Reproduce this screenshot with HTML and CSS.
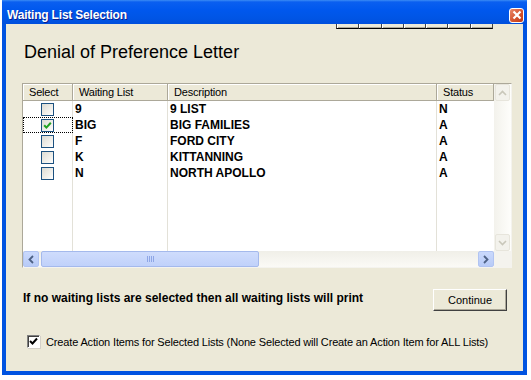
FILE: index.html
```html
<!DOCTYPE html>
<html lang="en">
<head>
    <meta charset="UTF-8">
    <title>Waiting List Selection</title>
    <link rel="stylesheet" href="styles.css">
</head>
<body>

<div class="window">
    <div class="titlebar">
        <span class="title">Waiting List Selection</span>
        <span class="close-btn">
            <svg width="10" height="10" viewBox="0 0 10 10"><path d="M1.5 1.5 L8.5 8.5 M8.5 1.5 L1.5 8.5" stroke="#fff" stroke-width="2.2"/></svg>
        </span>
    </div>

    <div class="client">
        <div class="tabstrip">
            <span></span><span></span><span></span><span></span><span></span><span></span><span></span>
        </div>

        <h1 class="heading">Denial of Preference Letter</h1>

        <div class="grid">
            <div class="grid-main">
                <div class="list">
                    <div class="hcell">Select</div>
                    <div class="hcell">Waiting List</div>
                    <div class="hcell">Description</div>
                    <div class="hcell">Status</div>

                    <div class="cell sel"><span class="xp-box"></span></div>
                    <div class="cell">9</div>
                    <div class="cell">9 LIST</div>
                    <div class="cell">N</div>

                    <div class="cell sel focused"><span class="xp-box checked"><svg width="9" height="9" viewBox="0 0 9 9"><path d="M1.2 4.2 L3.4 6.6 L7.8 1.8" fill="none" stroke="#21a121" stroke-width="2"/></svg></span></div>
                    <div class="cell">BIG</div>
                    <div class="cell">BIG FAMILIES</div>
                    <div class="cell">A</div>

                    <div class="cell sel"><span class="xp-box"></span></div>
                    <div class="cell">F</div>
                    <div class="cell">FORD CITY</div>
                    <div class="cell">A</div>

                    <div class="cell sel"><span class="xp-box"></span></div>
                    <div class="cell">K</div>
                    <div class="cell">KITTANNING</div>
                    <div class="cell">A</div>

                    <div class="cell sel"><span class="xp-box"></span></div>
                    <div class="cell">N</div>
                    <div class="cell">NORTH APOLLO</div>
                    <div class="cell">A</div>

                    <div class="cell"></div>
                    <div class="cell"></div>
                    <div class="cell"></div>
                    <div class="cell"></div>
                </div>
                <div class="vscroll">
                    <span class="vbtn"><svg width="9" height="6" viewBox="0 0 9 6"><path d="M1 5 L4.5 1.5 L8 5" fill="none" stroke="#c9c7ba" stroke-width="1.6"/></svg></span>
                    <span class="vtrack"></span>
                    <span class="vbtn"><svg width="9" height="6" viewBox="0 0 9 6"><path d="M1 1 L4.5 4.5 L8 1" fill="none" stroke="#c9c7ba" stroke-width="1.6"/></svg></span>
                </div>
            </div>
            <div class="hscroll-row">
                <div class="hscroll">
                    <span class="hbtn"><svg width="6" height="9" viewBox="0 0 6 9"><path d="M5 1 L1.5 4.5 L5 8" fill="none" stroke="#4d6185" stroke-width="1.8"/></svg></span>
                    <span class="thumb"><span class="grip"></span></span>
                    <span class="htrack"></span>
                    <span class="hbtn"><svg width="6" height="9" viewBox="0 0 6 9"><path d="M1 1 L4.5 4.5 L1 8" fill="none" stroke="#4d6185" stroke-width="1.8"/></svg></span>
                </div>
                <div class="corner"></div>
            </div>
        </div>

        <div class="note-row">
            <p class="note">If no waiting lists are selected then all waiting lists will print</p>
            <button class="continue-btn">Continue</button>
        </div>

        <label class="action-check">
            <span class="classic-box"><svg width="9" height="9" viewBox="0 0 9 9"><path d="M1 4 L3.5 6.5 L8 1.5" fill="none" stroke="#000" stroke-width="2"/></svg></span>
            Create Action Items for Selected Lists (None Selected will Create an Action Item for ALL Lists)
        </label>
    </div>
</div>

</body>
</html>
```

FILE: styles.css
```css
body {
    margin: 0;
    background: #fff;
    font-family: "Liberation Sans", Arial, sans-serif;
}
.window {
    width: 525px;
    margin-left: 2px;
    background: #0053e1;
    padding: 0 4px 4px 4px;
    box-sizing: border-box;
}
.titlebar {
    height: 24px;
    margin: 0 -4px;
    padding: 6px 3px 0 5px;
    box-sizing: border-box;
    display: flex;
    align-items: center;
    justify-content: space-between;
    background: linear-gradient(#3b8cf5 0, #0a5ff0 2px, #0058ee 40%, #0055e5 75%, #004fdc 100%);
}
.title {
    color: #fff;
    font-weight: bold;
    font-size: 12px;
    letter-spacing: -0.2px;
    text-shadow: 1px 1px 0 #0a1e8c;
}
.close-btn {
    width: 13px;
    height: 13px;
    border: 1px solid #fff;
    border-radius: 3px;
    background: linear-gradient(135deg, #e98a6c, #d5532f 55%, #bf3a17);
    display: flex;
    align-items: center;
    justify-content: center;
}
.client {
    background: #ece9d8;
    height: 347px;
    padding-left: 16px;
}
.tabstrip {
    display: flex;
    width: 157px;
    height: 5px;
    margin-left: 314px;
}
.tabstrip span {
    flex: 1;
    border-right: 1px solid #404040;
    border-bottom: 1px solid #000;
    box-shadow: inset 1px 0 0 #fff, inset 0 -1px 0 #aca899;
}
.tabstrip span:first-child {
    border-left: 1px solid #404040;
}
.heading {
    margin: 12px 0 0 2px;
    font-size: 18px;
    font-weight: normal;
    line-height: 22px;
    color: #000;
}
.grid {
    width: 490px;
    height: 185px;
    margin-top: 20px;
    box-sizing: border-box;
    border: 1px solid #aca899;
    border-right-color: #f4f3ee;
    border-bottom-color: #f4f3ee;
    display: flex;
    flex-direction: column;
}
.grid-main {
    display: flex;
    height: 167px;
}
.list {
    width: 471px;
    display: grid;
    grid-template-columns: 50px 95px 269px 57px;
    grid-template-rows: 17px repeat(5, 16px) 1fr;
    background: #fff;
}
.hcell {
    background: #ece9d8;
    border-right: 1px solid #aca899;
    border-bottom: 1px solid #aca899;
    box-shadow: inset 1px 1px 0 #fff;
    font-size: 11px;
    line-height: 17px;
    padding-left: 6px;
    letter-spacing: -0.2px;
    color: #000;
    overflow: hidden;
}
.cell {
    border-right: 1px solid #e3e1d8;
    font-size: 12px;
    font-weight: bold;
    line-height: 16px;
    padding-left: 2px;
    color: #000;
    white-space: nowrap;
}
.cell:nth-child(4n) {
    border-right: none;
}
.cell.sel {
    display: flex;
    align-items: center;
    justify-content: center;
    padding: 0;
}
.cell.focused {
    outline: 1px dotted #000;
    outline-offset: -1px;
}
.xp-box {
    width: 11px;
    height: 11px;
    border: 1px solid #1c5180;
    background: linear-gradient(135deg, #dcdbd3, #f4f3ef 70%, #fff);
    display: flex;
    align-items: center;
    justify-content: center;
}
.vscroll {
    width: 17px;
    display: flex;
    flex-direction: column;
    background: linear-gradient(90deg, #f3f2ec, #fefefb);
}
.vbtn {
    height: 15px;
    margin: 0 1px;
    border: 1px solid #e7e5dc;
    border-radius: 2px;
    background: #f3f2ec;
    display: flex;
    align-items: center;
    justify-content: center;
}
.vtrack {
    flex: 1;
}
.hscroll-row {
    display: flex;
    height: 16px;
}
.hscroll {
    width: 471px;
    display: flex;
    background: linear-gradient(#f0efe8, #fbfaf6);
}
.hbtn {
    width: 14px;
    border: 1px solid #b1c4f2;
    border-radius: 2px;
    background: linear-gradient(#cad9fc, #b8cbf7);
    display: flex;
    align-items: center;
    justify-content: center;
}
.thumb {
    width: 216px;
    margin-left: 2px;
    border: 1px solid #a4b9ec;
    border-radius: 2px;
    background: linear-gradient(#cfdcfc, #c0d1fa);
    display: flex;
    align-items: center;
    justify-content: center;
}
.grip {
    width: 7px;
    height: 6px;
    background: repeating-linear-gradient(90deg, #8ea6e6 0 1px, transparent 1px 2px);
}
.htrack {
    flex: 1;
}
.corner {
    flex: 1;
    background: #f4f3ee;
}
.note-row {
    display: flex;
    justify-content: space-between;
    align-items: flex-start;
    width: 485px;
    margin-top: 21px;
}
.note {
    margin: 2px 0 0 1px;
    font-size: 12px;
    font-weight: bold;
    line-height: 15px;
}
.continue-btn {
    width: 74px;
    height: 22px;
    font-family: "Liberation Sans", Arial, sans-serif;
    font-size: 11px;
    color: #000;
    background: #ece9d8;
    border: 1px solid;
    border-color: #fff #404040 #404040 #fff;
    box-shadow: inset -1px -1px 0 #aca899;
}
.action-check {
    display: flex;
    align-items: center;
    gap: 6px;
    margin: 24px 0 0 5px;
    font-size: 11px;
    letter-spacing: -0.15px;
    color: #000;
}
.classic-box {
    width: 11px;
    height: 11px;
    background: #fff;
    border: 1px solid;
    border-color: #808080 #fff #fff #808080;
    box-shadow: inset 1px 1px 0 #404040, 1px 1px 0 #d4d0c8;
    display: flex;
    align-items: center;
    justify-content: center;
}
```
